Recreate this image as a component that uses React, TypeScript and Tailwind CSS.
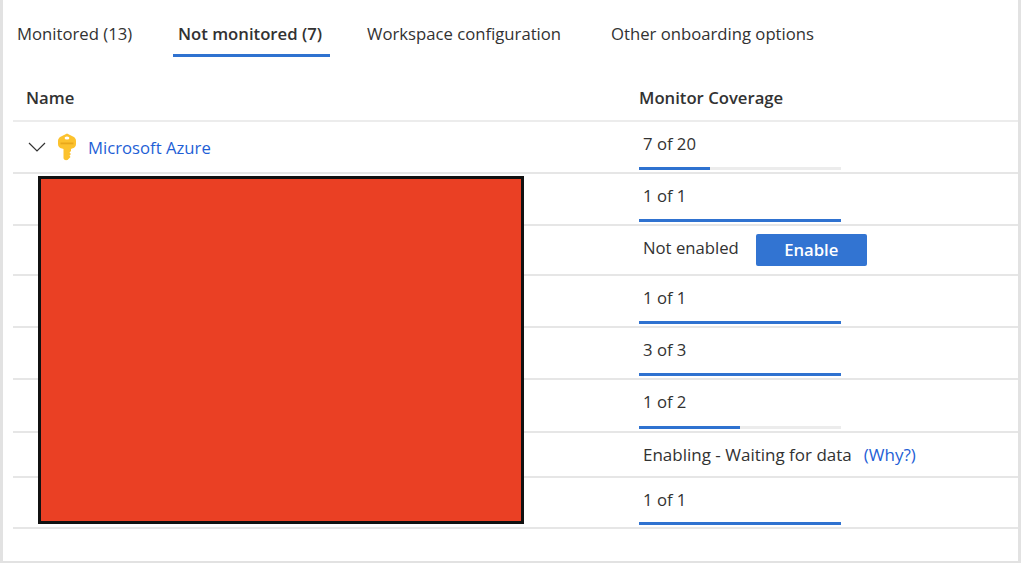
const rows = [
  { h: 'h-[52px]', label: '1 of 1', pct: 100 },
  { h: 'h-[50px]', enable: true },
  { h: 'h-[52px]', label: '1 of 1', pct: 100 },
  { h: 'h-[52px]', label: '3 of 3', pct: 100 },
  { h: 'h-[53px]', label: '1 of 2', pct: 50 },
  { h: 'h-[45px]', why: true },
  { h: 'h-[51px]', label: '1 of 1', pct: 100 },
];

function Bar({ pct }: { pct: number }) {
  return (
    <div className="absolute left-0 bottom-[2px] w-[202px] h-[3px] bg-[#ececec]">
      <div className="h-full bg-[#2f72d0]" style={{ width: `${pct}%` }} />
    </div>
  );
}

function KeyIcon() {
  return (
    <svg width="20" height="28" viewBox="0 0 20 28" className="block">
      <path
        d="M10 0.500 L16 3.500 C18 4.500 19 6 19 8 L19 11 C19 13.500 17.500 15 15 15.500 L14 16 L14 18 L12.500 19.500 L14 21 L12.500 22.500 L13.500 24 L10.500 27 C8 27.500 6.500 26.500 6.500 25 L6.500 16 L5 15.500 C2.500 15 1 13.500 1 11 L1 8 C1 6 2 4.500 4 3.500 Z"
        fill="#fcc22e"
      />
      <ellipse cx="10" cy="5" rx="2.400" ry="1.500" fill="#fff" />
      <rect x="3.500" y="9.500" width="13" height="1.800" fill="#e9a81c" />
    </svg>
  );
}

function Chevron() {
  return (
    <svg width="18" height="10" viewBox="0 0 18 10" fill="none" stroke="#333" strokeWidth="1.200" className="block">
      <path d="M1 1 L9 9 L17 1" />
    </svg>
  );
}

export default function App() {
  return (
    <div
      className="relative w-[1024px] h-[564px] bg-white text-[#323232] text-[16.7px] overflow-hidden"
      style={{ fontFamily: '"Open Sans", "Noto Sans", sans-serif' }}
    >
      <div className="w-[1021px] h-[563px] border-l-[3px] border-r-[3px] border-b-[2px] border-[#e2e2e2] pl-[10px]">
        <div className="flex h-[57px] -ml-[10px]">
          <div className="pl-[14px] w-[170px] pt-[22px] leading-[24px] whitespace-nowrap">Monitored (13)</div>
          <div className="w-[157px] h-[57px] border-b-[3px] border-[#2f72d0] pt-[22px] pl-[5px] leading-[24px] font-semibold whitespace-nowrap">
            Not monitored (7)
          </div>
          <div className="pl-[37px] w-[281px] pt-[22px] leading-[24px] whitespace-nowrap">Workspace configuration</div>
          <div className="pt-[22px] leading-[24px] whitespace-nowrap">Other onboarding options</div>
        </div>
        <div className="flex items-center h-[65px] border-b-[2px] border-[#ececec] font-semibold pt-[19px]">
          <div className="w-[626px] pl-[13px]">Name</div>
          <div>Monitor Coverage</div>
        </div>
        <div className="flex h-[52px] border-b-[2px] border-[#e6e6e6]">
          <div className="w-[626px] flex items-center pl-[15px]">
            <Chevron />
            <span className="ml-[11px] mr-[11px]"><KeyIcon /></span>
            <span className="mt-[2px] text-[#1f5fd6]">Microsoft Azure</span>
          </div>
          <div className="relative flex-1 pl-[4px] pt-[10px] leading-[24px]">
            7 of 20
            <Bar pct={35} />
          </div>
        </div>
        {rows.map((row, i) => (
          <div key={i} className={`flex ${row.h} border-b-[2px] border-[#e6e6e6]`}>
            <div className="w-[626px]" />
            {row.label && (
              <div className="relative flex-1 pl-[4px] pt-[10px] leading-[24px]">
                {row.label}
                <Bar pct={row.pct} />
              </div>
            )}
            {row.enable && (
              <div className="flex-1 flex items-center pl-[4px]">
                <span className="-mt-[4px]">Not enabled</span>
                <button className="ml-[17px] w-[111px] h-[32px] rounded-[2px] bg-[#3274d2] text-white font-semibold">
                  Enable
                </button>
              </div>
            )}
            {row.why && (
              <div className="flex-1 flex items-center pl-[4px] text-[17px]">
                <span>Enabling - Waiting for data</span>
                <span className="ml-[12px] text-[#1f5fd6]">(Why?)</span>
              </div>
            )}
          </div>
        ))}
      </div>
      <div className="absolute left-[38px] top-[176px] w-[486px] h-[348px] bg-[#ea4024] border-[3px] border-[#111]" />
    </div>
  );
}
